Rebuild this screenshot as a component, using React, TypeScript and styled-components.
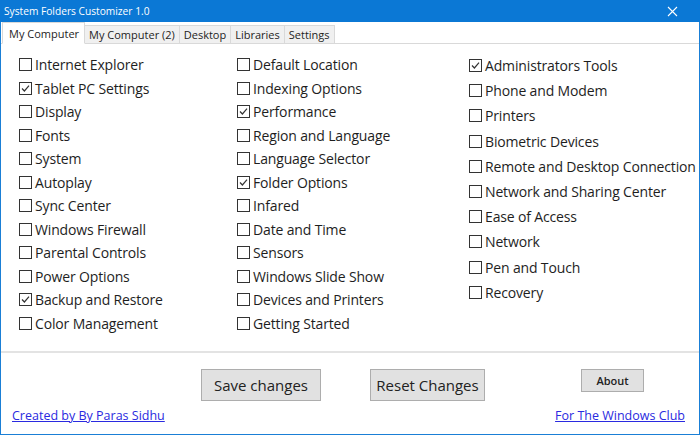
import styled, { createGlobalStyle } from "styled-components";

const GlobalStyle = createGlobalStyle`
  html, body {
    margin: 0;
    padding: 0;
    background: #ffffff;
  }
  * {
    box-sizing: border-box;
  }
`;

const FONT = `"Open Sans", "Noto Sans", sans-serif`;

const columns = [
  {
    rowHeight: 23.5,
    items: [
      { label: "Internet Explorer", checked: false },
      { label: "Tablet PC Settings", checked: true },
      { label: "Display", checked: false },
      { label: "Fonts", checked: false },
      { label: "System", checked: false },
      { label: "Autoplay", checked: false },
      { label: "Sync Center", checked: false },
      { label: "Windows Firewall", checked: false },
      { label: "Parental Controls", checked: false },
      { label: "Power Options", checked: false },
      { label: "Backup and Restore", checked: true },
      { label: "Color Management", checked: false },
    ],
  },
  {
    rowHeight: 23.5,
    items: [
      { label: "Default Location", checked: false },
      { label: "Indexing Options", checked: false },
      { label: "Performance", checked: true },
      { label: "Region and Language", checked: false },
      { label: "Language Selector", checked: false },
      { label: "Folder Options", checked: true },
      { label: "Infared", checked: false },
      { label: "Date and Time", checked: false },
      { label: "Sensors", checked: false },
      { label: "Windows Slide Show", checked: false },
      { label: "Devices and Printers", checked: false },
      { label: "Getting Started", checked: false },
    ],
  },
  {
    rowHeight: 25.2,
    items: [
      { label: "Administrators Tools", checked: true },
      { label: "Phone and Modem", checked: false },
      { label: "Printers", checked: false },
      { label: "Biometric Devices", checked: false },
      { label: "Remote and Desktop Connection", checked: false },
      { label: "Network and Sharing Center", checked: false },
      { label: "Ease of Access", checked: false },
      { label: "Network", checked: false },
      { label: "Pen and Touch", checked: false },
      { label: "Recovery", checked: false },
    ],
  },
];

const tabs = ["My Computer", "My Computer (2)", "Desktop", "Libraries", "Settings"];

const CheckBox = ({ checked }: { checked: boolean }) => (
  <Styled.Box>
    {checked && (
      <svg width="11" height="11" viewBox="0 0 11 11">
        <path d="M2 5.5 L4.4 8 L9 2.6" fill="none" stroke="#333" strokeWidth="1.2" />
      </svg>
    )}
  </Styled.Box>
);

const App = () => {
  return (
    <>
      <GlobalStyle />
      <Styled.Window>
        <Styled.TitleBar>
          <Styled.Title>System Folders Customizer 1.0</Styled.Title>
          <Styled.Close>
            <svg width="11" height="11" viewBox="0 0 11 11">
              <path d="M1 1 L10 10 M10 1 L1 10" stroke="#fff" strokeWidth="1.1" />
            </svg>
          </Styled.Close>
        </Styled.TitleBar>

        <Styled.TabStrip>
          {tabs.map((t, i) => (
            <Styled.Tab key={t} $active={i === 0}>
              {t}
            </Styled.Tab>
          ))}
        </Styled.TabStrip>

        <Styled.Panel>
          {columns.map((col, ci) => (
            <Styled.Column key={ci}>
              {col.items.map((item) => (
                <Styled.Row key={item.label} $height={col.rowHeight}>
                  <CheckBox checked={item.checked} />
                  <Styled.Label>{item.label}</Styled.Label>
                </Styled.Row>
              ))}
            </Styled.Column>
          ))}
        </Styled.Panel>

        <Styled.Footer>
          <Styled.ButtonRow>
            <Styled.Button $width={120}>Save changes</Styled.Button>
            <Styled.Button $width={115}>Reset Changes</Styled.Button>
            <Styled.SmallButton>About</Styled.SmallButton>
          </Styled.ButtonRow>
          <Styled.LinkRow>
            <Styled.Link href="#">Created by By Paras Sidhu</Styled.Link>
            <Styled.Link href="#">For The Windows Club</Styled.Link>
          </Styled.LinkRow>
        </Styled.Footer>
      </Styled.Window>
    </>
  );
};

const Styled = {
  Window: styled.div`
    width: 700px;
    height: 435px;
    display: flex;
    flex-direction: column;
    border: 1px solid #1a7fd6;
    border-top: none;
    background: #ffffff;
    font-family: ${FONT};
    color: #1e1e1e;
  `,

  TitleBar: styled.div`
    height: 22px;
    margin: 0 -1px;
    background: #0b78d5;
    display: flex;
    align-items: center;
    justify-content: space-between;
    padding: 0 22px 0 4px;
  `,

  Title: styled.span`
    color: #ffffff;
    font-size: 10.2px;
  `,

  Close: styled.span`
    display: flex;
    align-items: center;
  `,

  TabStrip: styled.div`
    display: flex;
    align-items: flex-end;
    height: 22px;
    padding-left: 1px;
    border-bottom: 1px solid #d9d9d9;
  `,

  Tab: styled.div<{ $active: boolean }>`
    height: ${(p) => (p.$active ? "22px" : "19px")};
    margin-bottom: -1px;
    padding: ${(p) => (p.$active ? "1px 5px 0 6px" : "0 4px")};
    display: flex;
    align-items: center;
    font-size: 11px;
    background: ${(p) => (p.$active ? "#ffffff" : "#f0f0f0")};
    border: 1px solid #d9d9d9;
    border-bottom: ${(p) => (p.$active ? "1px solid #ffffff" : "1px solid #d9d9d9")};
    border-left: ${(p) => (p.$active ? "1px solid #d9d9d9" : "none")};
    white-space: nowrap;
  `,

  Panel: styled.div`
    height: 309px;
    display: grid;
    grid-template-columns: 218px 232px 1fr;
    padding: 9px 0 0 18px;
    border-bottom: 2px solid #e3e3e3;
  `,

  Column: styled.div`
    display: flex;
    flex-direction: column;
  `,

  Row: styled.div<{ $height: number }>`
    height: ${(p) => p.$height}px;
    display: flex;
    align-items: center;
    gap: 3px;
  `,

  Box: styled.span`
    width: 13px;
    height: 13px;
    border: 1px solid #333333;
    display: flex;
    align-items: center;
    justify-content: center;
    flex-shrink: 0;
    background: #ffffff;
  `,

  Label: styled.span`
    font-size: 14px;
    letter-spacing: -0.15px;
    white-space: nowrap;
  `,

  Footer: styled.div`
    flex: 1;
    display: flex;
    flex-direction: column;
  `,

  ButtonRow: styled.div`
    display: flex;
    align-items: flex-start;
    padding: 16px 0 0 200px;
    gap: 49px;
  `,

  Button: styled.div<{ $width: number }>`
    width: ${(p) => p.$width}px;
    height: 32px;
    display: flex;
    align-items: center;
    justify-content: center;
    background: #e1e1e1;
    border: 1px solid #adadad;
    font-size: 15px;
    color: #222;
  `,

  SmallButton: styled.div`
    width: 63px;
    height: 23px;
    margin-left: 47px;
    display: flex;
    align-items: center;
    justify-content: center;
    background: #e1e1e1;
    border: 1px solid #adadad;
    font-size: 11px;
    font-weight: 600;
    color: #222;
  `,

  LinkRow: styled.div`
    display: flex;
    justify-content: space-between;
    padding: 6px 14px 0 11px;
  `,

  Link: styled.a`
    font-size: 12.5px;
    color: #2a2ae0;
    text-decoration: underline;
  `,
};

export default App;
